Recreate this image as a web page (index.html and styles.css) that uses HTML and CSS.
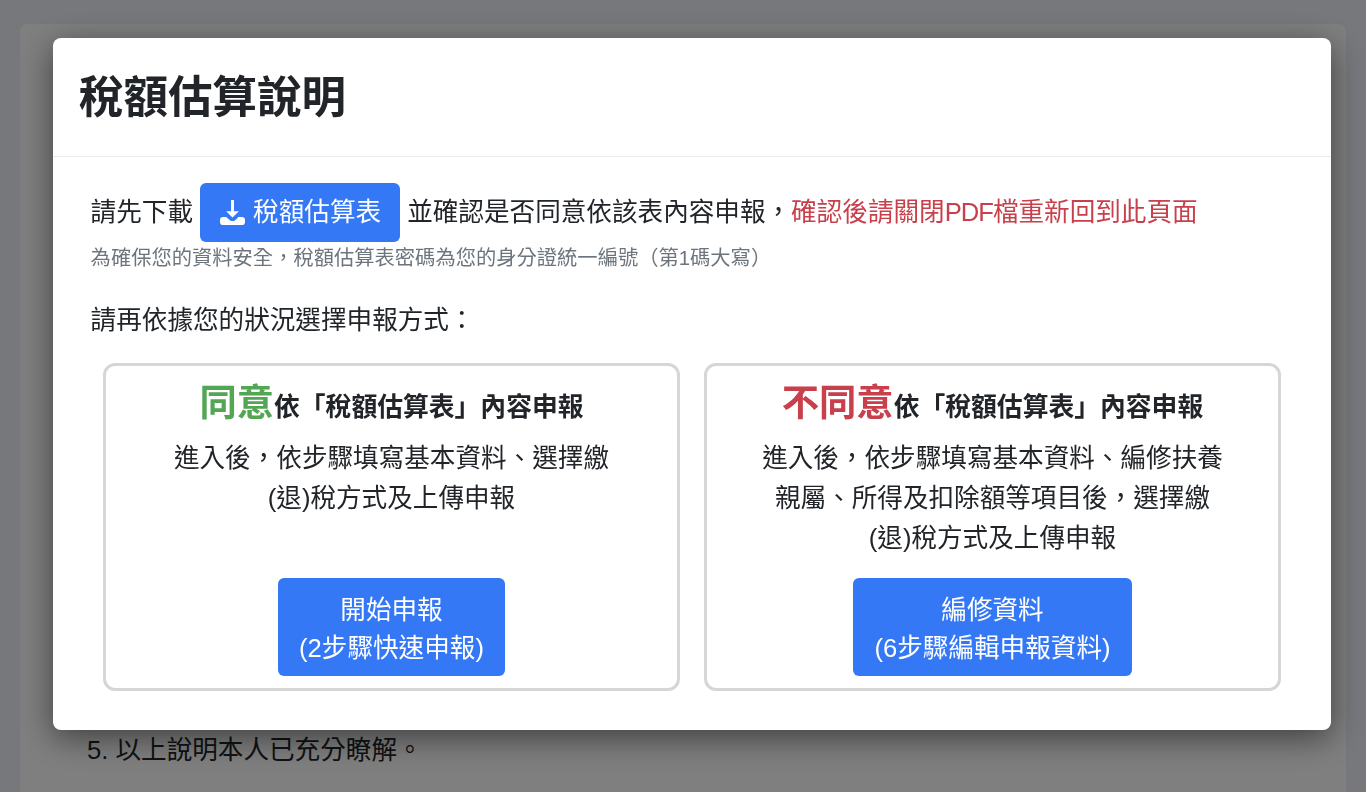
FILE: index.html
```html
<!DOCTYPE html>
<html lang="zh-Hant">
<head>
<meta charset="utf-8">
<title>稅額估算說明</title>
<link rel="stylesheet" href="styles.css">
</head>
<body>
<main class="page">
  <section class="page-card">
    <p class="page-line">5. 以上說明本人已充分瞭解。</p>
  </section>
</main>
<div class="backdrop"></div>
<div class="modal">
  <header class="modal-header">
    <h1 class="modal-title">稅額估算說明</h1>
  </header>
  <div class="modal-body">
    <p class="intro">請先下載 <a class="btn btn-download"><svg class="icon" viewBox="0 0 24 24" aria-hidden="true"><path d="M10.6 0h2.8v10.8h4.7L12 16.8l-6.1-6h4.7z"/><path d="M0 19.2A3 3 0 0 1 3 16.2h2.9l3.6 3.2c1.3 1.1 3.7 1.1 5 0l2.2-2 .7-1.2H21a3 3 0 0 1 3 3V21a3 3 0 0 1-3 3H3a3 3 0 0 1-3-3z"/></svg>稅額估算表</a> 並確認是否同意依該表內容申報，<span class="danger">確認後請關閉<span class="latin">PDF</span>檔重新回到此頁面</span></p>
    <p class="note">為確保您的資料安全，稅額估算表密碼為您的身分證統一編號（第1碼大寫）</p>
    <p class="prompt">請再依據您的狀況選擇申報方式：</p>
    <div class="choices">
      <article class="choice">
        <h2 class="choice-title"><span class="big agree">同意</span>依「稅額估算表」內容申報</h2>
        <p class="choice-text">進入後，依步驟填寫基本資料、選擇繳<br>(退)稅方式及上傳申報</p>
        <a class="btn btn-choice">開始申報<br>(2步驟快速申報)</a>
      </article>
      <article class="choice">
        <h2 class="choice-title"><span class="big disagree">不同意</span>依「稅額估算表」內容申報</h2>
        <p class="choice-text">進入後，依步驟填寫基本資料、編修扶養<br>親屬、所得及扣除額等項目後，選擇繳<br>(退)稅方式及上傳申報</p>
        <a class="btn btn-choice">編修資料<br>(6步驟編輯申報資料)</a>
      </article>
    </div>
  </div>
</div>
</body>
</html>
```
FILE: styles.css
```css
* { box-sizing: border-box; }
html, body { margin: 0; height: 100%; overflow: hidden; }
body {
  background: #eff1f6;
  color: #212529;
  font-family: "Liberation Sans", "Noto Sans CJK TC", sans-serif;
  font-size: 25.6px;
  line-height: 1.5;
}
.page { padding: 24px 20px 0; height: 100%; }
.page-card {
  background: #fff;
  border-radius: 8px 8px 0 0;
  height: 100%;
  overflow: hidden;
  padding: 707px 67px 0;
}
.page-line { margin: 0; }
.backdrop { position: fixed; inset: 0; background: rgba(0, 0, 0, .5); }
.modal {
  position: fixed;
  top: 38px;
  left: 53px;
  width: 1278px;
  height: 692px;
  background: #fff;
  border-radius: 8px;
  box-shadow: 0 8px 32px rgba(0, 0, 0, .5);
}
.modal-header {
  height: 119px;
  padding: 2px 26px 0;
  display: flex;
  align-items: center;
  border-bottom: 1px solid #e9ecef;
}
.modal-title { margin: 0; font-size: 44.5px; line-height: 1.2; font-weight: 700; }
.modal-body { padding: 26px 38px 0 37.6px; }
.intro { margin: 0; line-height: 59px; white-space: nowrap; }
.danger { color: #c8404c; }
.latin { letter-spacing: -1px; }
.note { margin: 2px 0 0; font-size: 20.3px; line-height: 29px; color: #6c757d; }
.prompt { margin: 29px 0 0; line-height: 36px; }
.btn { background: #3478f6; color: #fff; border-radius: 6px; display: inline-block; }
.btn-download { padding: 0 19px 0 20px; height: 59px; line-height: 59px; vertical-align: top; }
.icon { width: 25px; height: 25px; fill: #fff; vertical-align: -4px; margin-right: 8px; }
.choices {
  display: grid;
  grid-template-columns: repeat(2, 577px);
  gap: 24px;
  margin: 25px 0 0 12.4px;
}
.choice {
  height: 328px;
  border: 3px solid #d6d6d6;
  border-radius: 12px;
  padding: 10px 20px 0;
  text-align: center;
  display: flex;
  flex-direction: column;
  align-items: center;
}
.choice-title { margin: 0; font-size: 25.8px; font-weight: 700; line-height: 54px; }
.big { font-size: 37.3px; }
.agree { color: #53a653; }
.disagree { color: #c8404c; }
.choice-text { margin: 4px 0 0; line-height: 40px; flex: 1; }
.btn-choice { padding: 13px 21px 9px; line-height: 38px; margin-bottom: 12px; }
```
